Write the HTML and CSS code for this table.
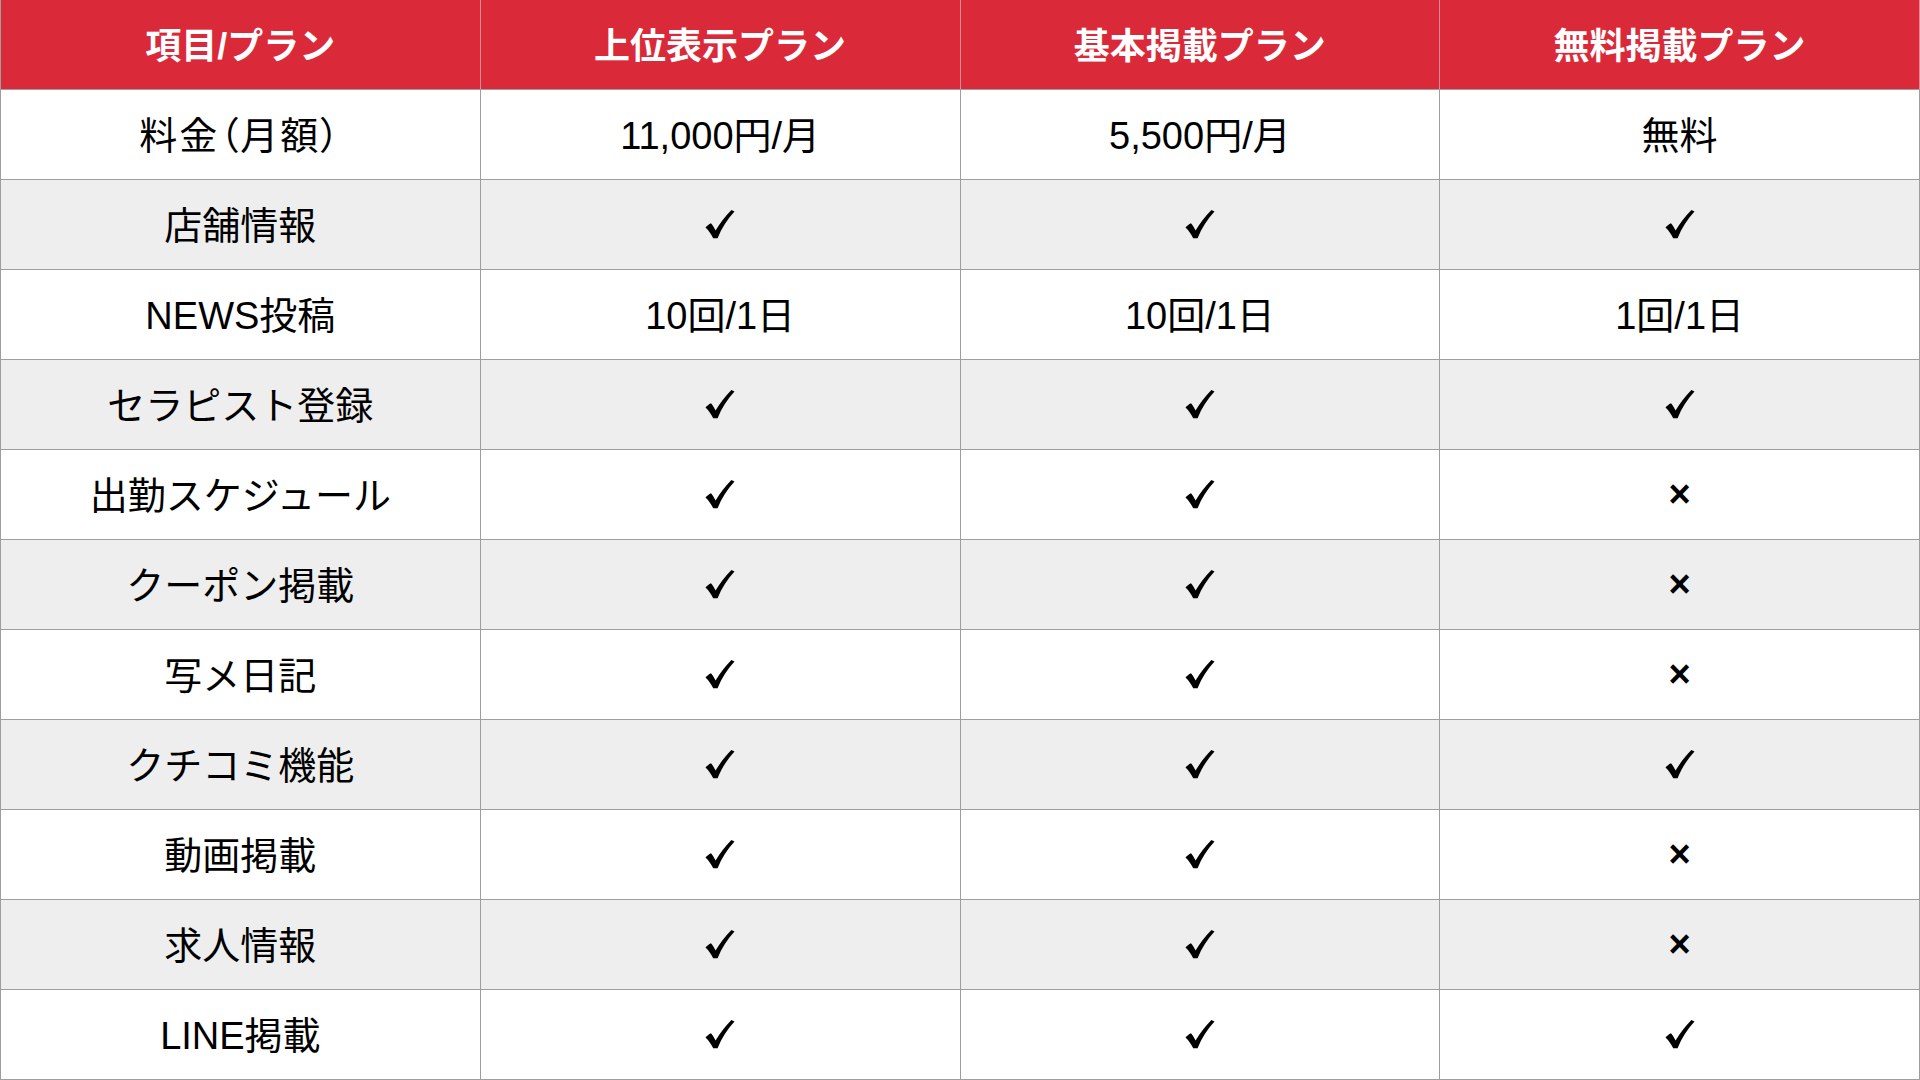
FILE: index.html
```html
<!DOCTYPE html>
<html lang="ja">
<head>
<meta charset="utf-8">
<title>プラン比較</title>
<link rel="stylesheet" href="styles.css">
</head>
<body>
<svg class="defs" width="0" height="0" aria-hidden="true">
  <defs>
    <symbol id="chk" viewBox="0 0 30 30">
      <path d="M0.5 18.6 C2 16.8 3.8 15.2 6 14.2 C7.6 16.2 9.2 18.8 10.6 21.4 C15 14 20.4 7 26.4 1 L29.5 2.6 C22.4 10.4 16.6 19 12.6 29.2 L8.2 29.2 C6.2 25.2 3.6 21.6 0.5 18.6 Z"/>
    </symbol>
  </defs>
</svg>
<div class="table">
  <div class="cell head">項目/プラン</div>
  <div class="cell head">上位表示プラン</div>
  <div class="cell head">基本掲載プラン</div>
  <div class="cell head">無料掲載プラン</div>

  <div class="cell"><span class="palt">料金（月額）</span></div>
  <div class="cell">11,000円/月</div>
  <div class="cell">5,500円/月</div>
  <div class="cell">無料</div>

  <div class="cell alt">店舗情報</div>
  <div class="cell alt"><svg class="ok"><use href="#chk"/></svg></div>
  <div class="cell alt"><svg class="ok"><use href="#chk"/></svg></div>
  <div class="cell alt"><svg class="ok"><use href="#chk"/></svg></div>

  <div class="cell">NEWS投稿</div>
  <div class="cell">10回/1日</div>
  <div class="cell">10回/1日</div>
  <div class="cell">1回/1日</div>

  <div class="cell alt">セラピスト登録</div>
  <div class="cell alt"><svg class="ok"><use href="#chk"/></svg></div>
  <div class="cell alt"><svg class="ok"><use href="#chk"/></svg></div>
  <div class="cell alt"><svg class="ok"><use href="#chk"/></svg></div>

  <div class="cell">出勤スケジュール</div>
  <div class="cell"><svg class="ok"><use href="#chk"/></svg></div>
  <div class="cell"><svg class="ok"><use href="#chk"/></svg></div>
  <div class="cell"><span class="ng">×</span></div>

  <div class="cell alt">クーポン掲載</div>
  <div class="cell alt"><svg class="ok"><use href="#chk"/></svg></div>
  <div class="cell alt"><svg class="ok"><use href="#chk"/></svg></div>
  <div class="cell alt"><span class="ng">×</span></div>

  <div class="cell">写メ日記</div>
  <div class="cell"><svg class="ok"><use href="#chk"/></svg></div>
  <div class="cell"><svg class="ok"><use href="#chk"/></svg></div>
  <div class="cell"><span class="ng">×</span></div>

  <div class="cell alt">クチコミ機能</div>
  <div class="cell alt"><svg class="ok"><use href="#chk"/></svg></div>
  <div class="cell alt"><svg class="ok"><use href="#chk"/></svg></div>
  <div class="cell alt"><svg class="ok"><use href="#chk"/></svg></div>

  <div class="cell">動画掲載</div>
  <div class="cell"><svg class="ok"><use href="#chk"/></svg></div>
  <div class="cell"><svg class="ok"><use href="#chk"/></svg></div>
  <div class="cell"><span class="ng">×</span></div>

  <div class="cell alt">求人情報</div>
  <div class="cell alt"><svg class="ok"><use href="#chk"/></svg></div>
  <div class="cell alt"><svg class="ok"><use href="#chk"/></svg></div>
  <div class="cell alt"><span class="ng">×</span></div>

  <div class="cell">LINE掲載</div>
  <div class="cell"><svg class="ok"><use href="#chk"/></svg></div>
  <div class="cell"><svg class="ok"><use href="#chk"/></svg></div>
  <div class="cell"><svg class="ok"><use href="#chk"/></svg></div>
</div>
</body>
</html>
```

FILE: styles.css
```css
html, body {
  margin: 0;
  padding: 0;
  background: #ffffff;
}

body {
  font-family: "Liberation Sans", "Noto Sans CJK JP", sans-serif;
  color: #000000;
}

.defs {
  position: absolute;
  width: 0;
  height: 0;
  overflow: hidden;
}

.table {
  width: 1920px;
  height: 1080px;
  display: grid;
  grid-template-columns: repeat(4, 1fr);
  grid-template-rows: repeat(12, 90px);
  border-left: 1px solid #9e9e9e;
  box-sizing: border-box;
}

.cell {
  display: flex;
  align-items: center;
  justify-content: center;
  border-right: 1px solid #9e9e9e;
  border-bottom: 1px solid #9e9e9e;
  padding-bottom: 4px;
  box-sizing: border-box;
  font-size: 38px;
  background: #ffffff;
  white-space: nowrap;
}

.cell.alt {
  background: #eeeeee;
}

.cell.head {
  background: #da2a3a;
  color: #ffffff;
  font-weight: 700;
  font-size: 36px;
  border-right-color: #e88a92;
}

.palt {
  font-feature-settings: "palt";
  letter-spacing: 2px;
}

.ok {
  width: 30px;
  height: 30px;
  margin-top: 3px;
  fill: #000000;
  display: block;
}

.ng {
  font-family: "Liberation Sans", sans-serif;
  font-size: 38px;
  font-weight: 700;
  margin-top: 4px;
}
```
